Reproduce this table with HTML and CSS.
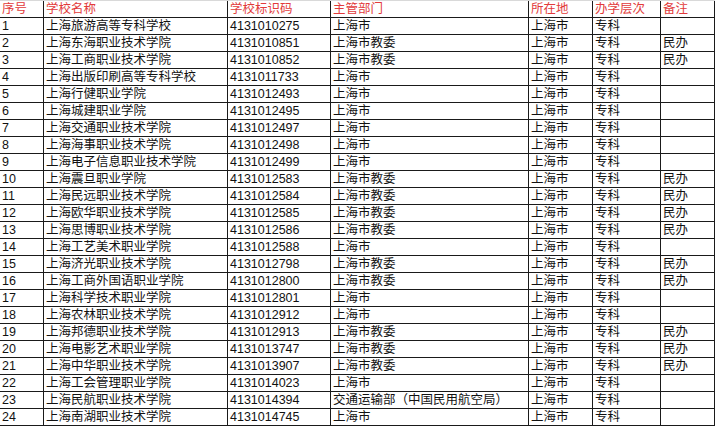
FILE: index.html
```html
<!DOCTYPE html>
<html lang="zh-CN">
<head>
<meta charset="utf-8">
<title>上海专科学校名单</title>
<link rel="stylesheet" href="styles.css">
</head>
<body>
<div class="sheet">
  <div class="row head"><div class="c">序号</div><div class="c">学校名称</div><div class="c">学校标识码</div><div class="c">主管部门</div><div class="c">所在地</div><div class="c">办学层次</div><div class="c">备注</div></div>
  <div class="row"><div class="c">1</div><div class="c">上海旅游高等专科学校</div><div class="c">4131010275</div><div class="c">上海市</div><div class="c">上海市</div><div class="c">专科</div><div class="c"></div></div>
  <div class="row"><div class="c">2</div><div class="c">上海东海职业技术学院</div><div class="c">4131010851</div><div class="c">上海市教委</div><div class="c">上海市</div><div class="c">专科</div><div class="c">民办</div></div>
  <div class="row"><div class="c">3</div><div class="c">上海工商职业技术学院</div><div class="c">4131010852</div><div class="c">上海市教委</div><div class="c">上海市</div><div class="c">专科</div><div class="c">民办</div></div>
  <div class="row"><div class="c">4</div><div class="c">上海出版印刷高等专科学校</div><div class="c">4131011733</div><div class="c">上海市</div><div class="c">上海市</div><div class="c">专科</div><div class="c"></div></div>
  <div class="row"><div class="c">5</div><div class="c">上海行健职业学院</div><div class="c">4131012493</div><div class="c">上海市</div><div class="c">上海市</div><div class="c">专科</div><div class="c"></div></div>
  <div class="row"><div class="c">6</div><div class="c">上海城建职业学院</div><div class="c">4131012495</div><div class="c">上海市</div><div class="c">上海市</div><div class="c">专科</div><div class="c"></div></div>
  <div class="row"><div class="c">7</div><div class="c">上海交通职业技术学院</div><div class="c">4131012497</div><div class="c">上海市</div><div class="c">上海市</div><div class="c">专科</div><div class="c"></div></div>
  <div class="row"><div class="c">8</div><div class="c">上海海事职业技术学院</div><div class="c">4131012498</div><div class="c">上海市</div><div class="c">上海市</div><div class="c">专科</div><div class="c"></div></div>
  <div class="row"><div class="c">9</div><div class="c">上海电子信息职业技术学院</div><div class="c">4131012499</div><div class="c">上海市</div><div class="c">上海市</div><div class="c">专科</div><div class="c"></div></div>
  <div class="row"><div class="c">10</div><div class="c">上海震旦职业学院</div><div class="c">4131012583</div><div class="c">上海市教委</div><div class="c">上海市</div><div class="c">专科</div><div class="c">民办</div></div>
  <div class="row"><div class="c">11</div><div class="c">上海民远职业技术学院</div><div class="c">4131012584</div><div class="c">上海市教委</div><div class="c">上海市</div><div class="c">专科</div><div class="c">民办</div></div>
  <div class="row"><div class="c">12</div><div class="c">上海欧华职业技术学院</div><div class="c">4131012585</div><div class="c">上海市教委</div><div class="c">上海市</div><div class="c">专科</div><div class="c">民办</div></div>
  <div class="row"><div class="c">13</div><div class="c">上海思博职业技术学院</div><div class="c">4131012586</div><div class="c">上海市教委</div><div class="c">上海市</div><div class="c">专科</div><div class="c">民办</div></div>
  <div class="row"><div class="c">14</div><div class="c">上海工艺美术职业学院</div><div class="c">4131012588</div><div class="c">上海市</div><div class="c">上海市</div><div class="c">专科</div><div class="c"></div></div>
  <div class="row"><div class="c">15</div><div class="c">上海济光职业技术学院</div><div class="c">4131012798</div><div class="c">上海市教委</div><div class="c">上海市</div><div class="c">专科</div><div class="c">民办</div></div>
  <div class="row"><div class="c">16</div><div class="c">上海工商外国语职业学院</div><div class="c">4131012800</div><div class="c">上海市教委</div><div class="c">上海市</div><div class="c">专科</div><div class="c">民办</div></div>
  <div class="row"><div class="c">17</div><div class="c">上海科学技术职业学院</div><div class="c">4131012801</div><div class="c">上海市</div><div class="c">上海市</div><div class="c">专科</div><div class="c"></div></div>
  <div class="row"><div class="c">18</div><div class="c">上海农林职业技术学院</div><div class="c">4131012912</div><div class="c">上海市</div><div class="c">上海市</div><div class="c">专科</div><div class="c"></div></div>
  <div class="row"><div class="c">19</div><div class="c">上海邦德职业技术学院</div><div class="c">4131012913</div><div class="c">上海市教委</div><div class="c">上海市</div><div class="c">专科</div><div class="c">民办</div></div>
  <div class="row"><div class="c">20</div><div class="c">上海电影艺术职业学院</div><div class="c">4131013747</div><div class="c">上海市教委</div><div class="c">上海市</div><div class="c">专科</div><div class="c">民办</div></div>
  <div class="row"><div class="c">21</div><div class="c">上海中华职业技术学院</div><div class="c">4131013907</div><div class="c">上海市教委</div><div class="c">上海市</div><div class="c">专科</div><div class="c">民办</div></div>
  <div class="row"><div class="c">22</div><div class="c">上海工会管理职业学院</div><div class="c">4131014023</div><div class="c">上海市</div><div class="c">上海市</div><div class="c">专科</div><div class="c"></div></div>
  <div class="row"><div class="c">23</div><div class="c">上海民航职业技术学院</div><div class="c">4131014394</div><div class="c">交通运输部（中国民用航空局）</div><div class="c">上海市</div><div class="c">专科</div><div class="c"></div></div>
  <div class="row"><div class="c">24</div><div class="c">上海南湖职业技术学院</div><div class="c">4131014745</div><div class="c">上海市</div><div class="c">上海市</div><div class="c">专科</div><div class="c"></div></div>
</div>
</body>
</html>
```
FILE: styles.css
```css
html, body {
  margin: 0;
  padding: 0;
  background: #ffffff;
}
.sheet {
  width: 715px;
  font-family: "Liberation Sans", "Noto Sans CJK SC", sans-serif;
  font-size: 12.5px;
  color: #111111;
}
.row {
  display: grid;
  grid-template-columns: 44px 184px 103px 198px 64px 68px 54px;
  height: 17px;
  box-sizing: border-box;
  border-bottom: 1px solid #1a1a1a;
}
.row.head {
  height: 18px;
  border-top: 1px solid #d9d9d9;
  color: #e23b3b;
}
.c {
  box-sizing: border-box;
  border-right: 1px solid #1a1a1a;
  padding-left: 2px;
  line-height: 16px;
  white-space: nowrap;
  overflow: hidden;
}
```
